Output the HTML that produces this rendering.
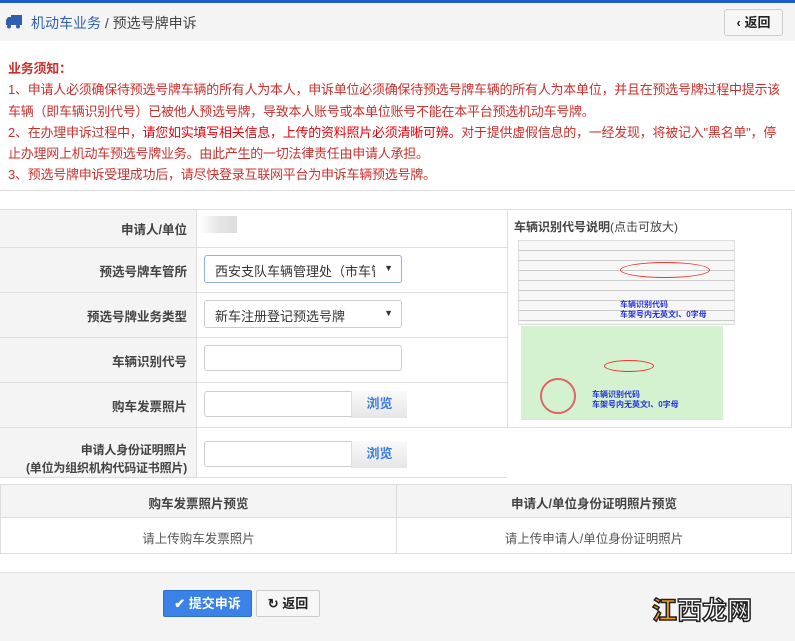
<!DOCTYPE html>
<html><head><meta charset="utf-8"><style>
*{margin:0;padding:0;box-sizing:border-box}
body{width:795px;height:641px;background:#fff;font-family:"Liberation Sans","Noto Sans CJK SC",sans-serif;font-size:13px;color:#333;position:relative;overflow:hidden}
.a{position:absolute}
.lab{position:absolute;left:0;width:196px;background:#f4f4f4;border-bottom:1px solid #ddd;text-align:right;padding-right:9px;font-weight:bold;color:#444;display:flex;align-items:center;justify-content:flex-end;font-size:12.5px}
.cell{position:absolute;left:196px;width:311px;border-left:1px solid #ddd;border-bottom:1px solid #ddd}
.sel{position:absolute;left:7px;width:198px;height:28px;border:1px solid #ccc;border-radius:3px;font-size:13px;color:#333;padding:5px 10px;background:#fff;white-space:nowrap;overflow:hidden}
.sel span{display:block;width:160px;overflow:hidden}
.sel:after{content:"▼";position:absolute;right:8px;top:7px;font-size:9px;color:#333}
.in{position:absolute;left:7px;width:198px;height:26px;border:1px solid #ccc;border-radius:3px;background:#fff}
.br{position:absolute;left:146px;top:-1px;width:56px;height:27px;background:linear-gradient(#fafafa,#e6e6e6);border-left:1px solid #ddd;color:#3a7be0;text-align:center;line-height:26px;font-size:13px;font-weight:bold}
</style></head><body>
<div class="a" style="left:0;top:0;width:795px;height:3px;background:#1e5cc8"></div>
<div class="a" style="left:0;top:3px;width:795px;height:38px;background:#f4f4f4"></div>
<svg class="a" style="left:6px;top:15px" width="16" height="14" viewBox="0 0 16 14"><rect x="5" y="0" width="11" height="10" fill="#2e5fb0"/><path d="M0 5 L2 2 H5 V10 H0Z" fill="#2e5fb0"/><circle cx="3" cy="11.5" r="2" fill="#2e5fb0"/><circle cx="12" cy="11.5" r="2" fill="#2e5fb0"/></svg>
<div class="a" style="left:31px;top:13px;font-size:14px;color:#2e5fb0">机动车业务 <span style="color:#444">/ 预选号牌申诉</span></div>
<div class="a" style="left:724px;top:9px;width:59px;height:27px;border:1px solid #ccc;border-radius:3px;background:#f6f6f6;font-size:13px;line-height:25px;text-align:center;color:#222;font-weight:bold">‹ 返回</div>
<div class="a" style="left:8px;top:58px;width:775px;color:#c9302c;font-size:13px;line-height:21.3px;letter-spacing:-0.25px">
<b>业务须知：</b><br>1、申请人必须确保待预选号牌车辆的所有人为本人，申诉单位必须确保待预选号牌车辆的所有人为本单位，并且在预选号牌过程中提示该<br>车辆（即车辆识别代号）已被他人预选号牌，导致本人账号或本单位账号不能在本平台预选机动车号牌。<br>2、在办理申诉过程中，<span style="color:#e8000b">请您如实填写相关信息，上传的资料照片必须清晰可辨。</span>对于提供虚假信息的，一经发现，将被记入"黑名单"，停<br>止办理网上机动车预选号牌业务。由此产生的一切法律责任由申请人承担。<br>3、预选号牌申诉受理成功后，请尽快登录互联网平台为申诉车辆预选号牌。</div>
<div class="a" style="left:0;top:190px;width:795px;height:1px;background:#ddd"></div>
<div class="a" style="left:0;top:209px;width:792px;border-top:1px solid #ddd"></div>
<div class="a" style="left:0;top:209px;width:1px;height:269px;background:#ddd"></div>
<div class="lab" style="top:210px;height:38px">申请人/单位</div>
<div class="cell" style="top:210px;height:38px"><div class="a" style="left:2px;top:6px;width:38px;height:17px;background:linear-gradient(90deg,#fff,#e6e6e6,#ddd)"></div></div>
<div class="lab" style="top:248px;height:45px">预选号牌车管所</div>
<div class="cell" style="top:248px;height:45px"><div class="sel" style="top:7px;border-color:#8fb0ec"><span>西安支队车辆管理处（市车管所</span></div></div>
<div class="lab" style="top:293px;height:45px">预选号牌业务类型</div>
<div class="cell" style="top:293px;height:45px"><div class="sel" style="top:7px"><span>新车注册登记预选号牌</span></div></div>
<div class="lab" style="top:338px;height:45px">车辆识别代号</div>
<div class="cell" style="top:338px;height:45px"><div class="in" style="top:7px"></div></div>
<div class="lab" style="top:383px;height:45px">购车发票照片</div>
<div class="cell" style="top:383px;height:45px"><div class="in" style="top:8px"><div class="br">浏览</div></div></div>
<div class="lab" style="top:428px;height:50px;line-height:18px;flex-direction:column;align-items:flex-end;font-size:12px;letter-spacing:-0.2px"><div>申请人身份证明照片</div><div>(单位为组织机构代码证书照片)</div></div>
<div class="cell" style="top:428px;height:50px"><div class="in" style="top:13px"><div class="br">浏览</div></div></div>
<div class="a" style="left:507px;top:209px;width:285px;height:219px;border-left:1px solid #ddd;border-right:1px solid #ddd;border-bottom:1px solid #ddd"></div>
<div class="a" style="left:514px;top:218px;font-size:12px;color:#444"><b>车辆识别代号说明</b>(点击可放大)</div>
<div class="a" style="left:518px;top:240px;width:217px;height:85px;background:#f7f7f7;border:1px solid #ddd;background-image:repeating-linear-gradient(#f7f7f7 0 9px,#ccc 9px 10px)"></div>
<div class="a" style="left:620px;top:262px;width:90px;height:16px;border:1px solid #e33;border-radius:50%"></div>
<div class="a" style="left:620px;top:300px;font-size:8px;color:#2233dd;font-weight:bold;line-height:10px">车辆识别代码<br>车架号内无英文I、0字母</div>
<div class="a" style="left:521px;top:326px;width:202px;height:94px;background:#d4f2d0"></div>
<div class="a" style="left:604px;top:360px;width:50px;height:12px;border:1px solid #e33;border-radius:50%"></div>
<div class="a" style="left:592px;top:390px;font-size:8px;color:#2233dd;font-weight:bold;line-height:10px">车辆识别代码<br>车架号内无英文I、0字母</div>
<div class="a" style="left:540px;top:378px;width:36px;height:36px;border:2px solid #d66;border-radius:50%"></div>
<div class="a" style="left:0;top:484px;width:792px;height:70px;border:1px solid #ddd"></div>
<div class="a" style="left:1px;top:485px;width:790px;height:33px;background:#f4f4f4;border-bottom:1px solid #ddd"></div>
<div class="a" style="left:396px;top:485px;width:1px;height:68px;background:#ddd"></div>
<div class="a" style="left:1px;top:493px;width:395px;text-align:center;font-weight:bold;color:#444;font-size:12.5px">购车发票照片预览</div>
<div class="a" style="left:397px;top:493px;width:394px;text-align:center;font-weight:bold;color:#444;font-size:12.5px">申请人/单位身份证明照片预览</div>
<div class="a" style="left:1px;top:528px;width:395px;text-align:center;color:#555;font-size:12.5px">请上传购车发票照片</div>
<div class="a" style="left:397px;top:528px;width:394px;text-align:center;color:#555;font-size:12.5px">请上传申请人/单位身份证明照片</div>
<div class="a" style="left:0;top:572px;width:795px;height:69px;background:#f4f4f4;border-top:1px solid #e2e2e2"></div>
<div class="a" style="left:163px;top:590px;width:89px;height:27px;background:#3b82e8;border:1px solid #2f6fd0;border-radius:2px;color:#fff;font-weight:bold;line-height:25px;text-align:center">✔ 提交申诉</div>
<div class="a" style="left:256px;top:590px;width:64px;height:27px;background:#f6f6f6;border:1px solid #ccc;border-radius:2px;color:#222;line-height:25px;text-align:center;font-weight:bold">↻ 返回</div>
<div class="a" style="left:652px;top:591px;font-size:25px;font-weight:bold;color:#fff;-webkit-text-stroke:1.5px #222"><span style="color:#f59a14">江</span>西龙网</div>
</body></html>
